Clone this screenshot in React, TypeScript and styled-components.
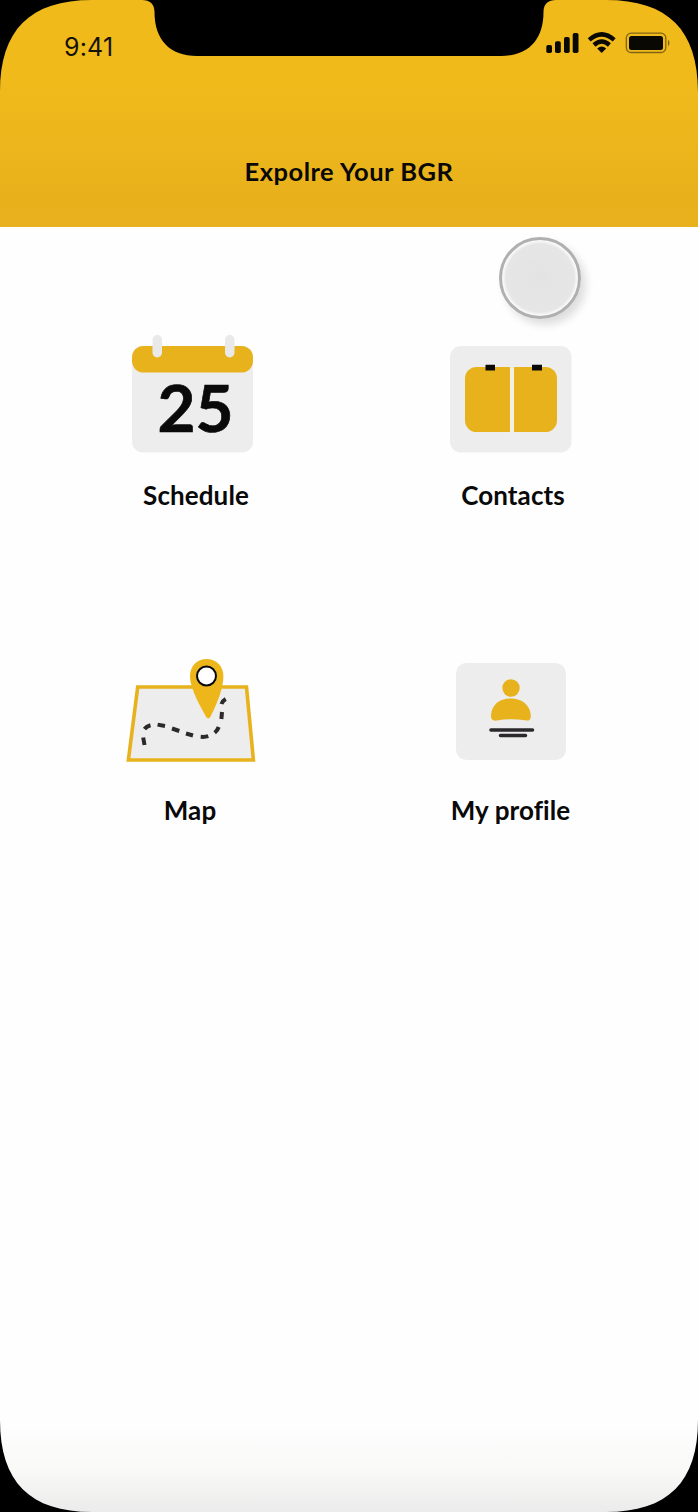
import React from 'react';
import styled, { createGlobalStyle } from 'styled-components';

const GlobalStyle = createGlobalStyle`
  html, body { margin: 0; padding: 0; background: #fff; }
  * { box-sizing: border-box; }
`;

const Screen = styled.main`
  position: relative;
  width: 698px;
  height: 1512px;
  overflow: hidden;
  display: flex;
  flex-direction: column;
  background: linear-gradient(#fefefe 0, #fefefe 1425px, #f9f9f8 1470px, #ebebeb 1512px);
  font-family: Lato, 'Liberation Sans', sans-serif;
  color: #090909;
`;

const Header = styled.header`
  height: 227px;
  flex: none;
  display: flex;
  flex-direction: column;
  background: linear-gradient(#f0ba1b 0, #f0ba1b 85px, #e8b11c 200px, #e8b11d 227px);
`;

const StatusBar = styled.div`
  position: relative;
  z-index: 2;
  height: 92px;
  padding: 31px 27px 0 64px;
  display: flex;
  justify-content: space-between;
  align-items: flex-start;
`;

const Clock = styled.time`
  font: 400 25px/32px Inter, sans-serif;
  letter-spacing: 0.2px;
  color: #15120a;
`;

const StatusIcons = styled.svg`
  display: block;
`;

const Title = styled.h1`
  margin: 63px 0 0;
  font-size: 25.5px;
  line-height: 32px;
  font-weight: 700;
  text-align: center;
  letter-spacing: 0.5px;
`;

const Menu = styled.nav`
  display: grid;
  grid-template-columns: 319px 319px;
  grid-template-rows: 315px 315px;
  padding: 98px 0 0 32.5px;
`;

const Tile = styled.a`
  display: flex;
  flex-direction: column;
  align-items: center;
  color: inherit;
  text-decoration: none;
`;

const Art = styled.svg`
  display: block;
  flex: none;
  overflow: visible;
`;

const Label = styled.span<{ $left?: number; $right?: number }>`
  margin-top: 24px;
  padding: 0 ${(p) => p.$right ?? 0}px 0 ${(p) => p.$left ?? 0}px;
  font-size: 26px;
  line-height: 32px;
  font-weight: 700;
  letter-spacing: 0.1px;
  font-variant-ligatures: none;
  white-space: nowrap;
`;

const TouchDot = styled.div`
  position: absolute;
  left: 499px;
  top: 237px;
  width: 82px;
  height: 82px;
  border-radius: 50%;
  border: 3px solid #b0b0b0;
  background: radial-gradient(circle, #e3e3e3 0, #e6e6e6 34px, #f8f8f8 37px);
  box-shadow: 5px 6px 9px rgba(0, 0, 0, 0.13);
`;

const Bezel = styled.svg`
  position: absolute;
  inset: 0;
  z-index: 1;
  pointer-events: none;
`;

const Gold = '#e8b21d';
const Paper = '#ededed';
const Ink = '#2b292b';

const CalendarArt = () => (
  <Art width="130" height="130" viewBox="127 325 130 130">
    <rect x="132" y="346" width="121" height="106.500" rx="11" fill={Paper} />
    <rect x="132" y="346" width="121" height="26.500" rx="11.500" fill={Gold} />
    <rect x="152.500" y="335" width="9.500" height="22.500" rx="4.700" fill="#e9e9e9" />
    <rect x="225" y="335" width="9.500" height="22.500" rx="4.700" fill="#e9e9e9" />
    <text x="157.600" y="431.700" fontFamily="Lato, sans-serif" fontWeight="700" fontSize="65.500" fill="#0a0a0a" stroke="#0a0a0a" strokeWidth="0.700">25</text>
  </Art>
);

const ContactsArt = () => (
  <Art width="130" height="130" viewBox="446 325 130 130">
    <rect x="450" y="346" width="121.500" height="106.500" rx="11" fill={Paper} />
    <rect x="465" y="367" width="92" height="65" rx="11.500" fill={Gold} />
    <rect x="510" y="366" width="4" height="67" fill="#f3f0e8" />
    <path d="M485.500 364.800h9.500v5.700h-9.500zM532 364.800h10v5.700h-10z" fill="#090909" />
  </Art>
);

const MapArt = () => (
  <Art width="130" height="130" viewBox="127 640 130 130">
    <path d="M137.700 687H246.500L253.400 760H128.400Z" fill={Paper} stroke={Gold} strokeWidth="3.600" />
    <path
      d="M144.500 745L143.200 737.500M144.500 729Q146.500 726.300 150.500 725.300M157.600 724.600L165 726M172 728.500L179.300 731M186 733.500L193 735.500M200.700 736.800Q205 737.200 208.300 736.200M214.700 732.700Q217.500 730.500 218.700 727M221.400 719L222 712M221.500 704Q222.500 700.800 225.700 699"
      fill="none"
      stroke={Ink}
      strokeWidth="4"
    />
    <path d="M206.600 659C197 659 190 666 190 676C190 686 196 699 206.200 717Q208.300 719.800 210.300 717C219 700 223.400 686 223.400 676C223.400 666 216 659 206.600 659Z" fill="#edb71c" />
    <circle cx="206.500" cy="676" r="9.500" fill="#fff" stroke="#090909" strokeWidth="2" />
  </Art>
);

const ProfileArt = () => (
  <Art width="130" height="130" viewBox="446 640 130 130">
    <rect x="456" y="663" width="110" height="97" rx="10.500" fill={Paper} />
    <circle cx="511" cy="688" r="8.700" fill={Gold} />
    <path d="M491 715C492 704 500 698.500 511 698.500C522 698.500 530 705 530.800 715C531 720 529 721.300 525 720.300C515 719 506 719 497 720.500C493 721.200 490.500 719.500 491 715Z" fill={Gold} />
    <path d="M491 730H532.500M500.500 735.500H525.500" stroke={Ink} strokeWidth="3.600" strokeLinecap="round" />
  </Art>
);

export default function App() {
  return (
    <Screen>
      <GlobalStyle />
      <Header>
        <StatusBar>
          <Clock>9:41</Clock>
          <StatusIcons width="126" height="24" viewBox="545 31 126 24">
            <g fill="#090802">
              <rect x="546.300" y="45" width="5.700" height="8" rx="1.800" />
              <rect x="555" y="41.300" width="5.800" height="11.700" rx="1.800" />
              <rect x="564" y="37" width="5.700" height="16" rx="1.800" />
              <rect x="572.700" y="33" width="5.800" height="20" rx="1.800" />
              <path d="M601.700 53L606.200 48.500Q601.700 44.500 597.200 48.500Z" />
              <rect x="629" y="36" width="34" height="14" rx="2.500" />
            </g>
            <g fill="none" stroke="#090802" strokeWidth="4.400">
              <path d="M589.200 39.800Q601.700 29 614.200 39.800" />
              <path d="M594 45Q601.700 38 609.400 45" />
            </g>
            <rect x="626.300" y="33.200" width="39.500" height="19.300" rx="4.800" fill="none" stroke="#806415" strokeWidth="1.300" />
            <path d="M668 39.500Q671 43 668 46.500Z" fill="#806415" />
          </StatusIcons>
        </StatusBar>
        <Title>Expolre Your BGR</Title>
      </Header>
      <Menu>
        <Tile><CalendarArt /><Label $left={8}>Schedule</Label></Tile>
        <Tile><ContactsArt /><Label $left={4}>Contacts</Label></Tile>
        <Tile><MapArt /><Label $right={4}>Map</Label></Tile>
        <Tile><ProfileArt /><Label $right={1}>My profile</Label></Tile>
      </Menu>
      <TouchDot />
      <Bezel width="698" height="1512" viewBox="0 0 698 1512">
        <path d="M0 0H92C30 0 0 30 0 92Z" />
        <path d="M698 0H606C668 0 698 30 698 92Z" />
        <path d="M0 1512H92C30 1512 0 1482 0 1420Z" />
        <path d="M698 1512H606C668 1512 698 1482 698 1420Z" />
        <path d="M142 0C150 0 154.500 4 154.500 12C154.500 40 170 56 197 56H501C528 56 543.500 40 543.500 12C543.500 4 548 0 556 0Z" />
      </Bezel>
    </Screen>
  );
}
